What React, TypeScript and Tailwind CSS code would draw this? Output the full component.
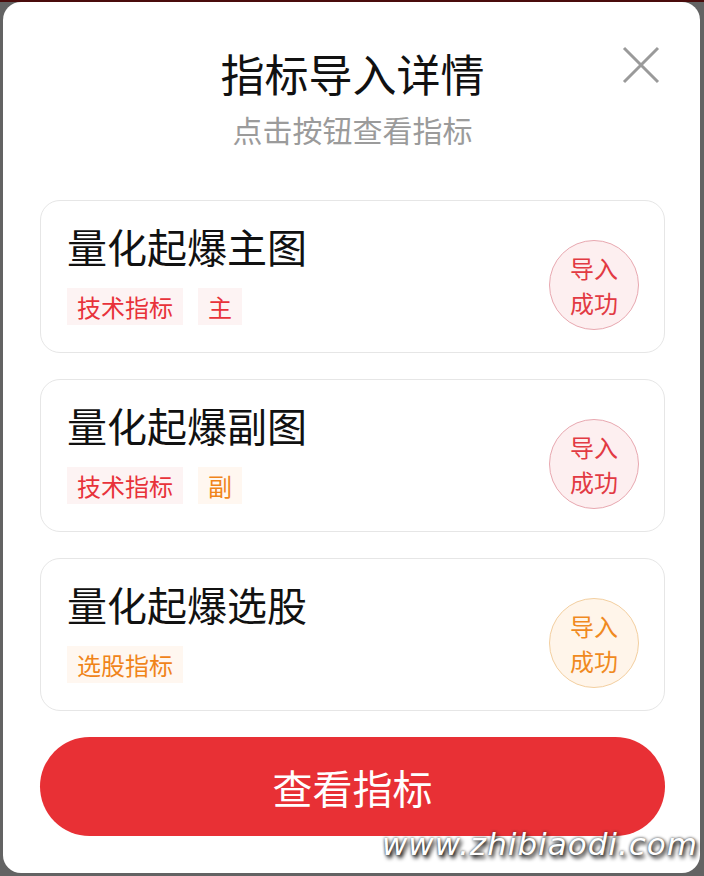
import React from 'react';

interface Tag {
  label: string;
  tone: 'red' | 'orange';
}

interface Item {
  name: string;
  tags: Tag[];
  tone: 'red' | 'orange';
}

const items: Item[] = [
  { name: '量化起爆主图', tags: [{ label: '技术指标', tone: 'red' }, { label: '主', tone: 'red' }], tone: 'red' },
  { name: '量化起爆副图', tags: [{ label: '技术指标', tone: 'red' }, { label: '副', tone: 'orange' }], tone: 'red' },
  { name: '量化起爆选股', tags: [{ label: '选股指标', tone: 'orange' }], tone: 'orange' },
];

const font = { fontFamily: '"Noto Sans CJK SC", "Noto Sans", sans-serif' };

const TagChip: React.FC<{ tag: Tag }> = ({ tag }) => (
  <span
    className={
      tag.tone === 'red'
        ? 'px-[10px] h-[37px] leading-[37px] text-[24px] bg-[#fdf3f3] text-[#e8323a]'
        : 'px-[10px] h-[37px] leading-[37px] text-[24px] bg-[#fff7f0] text-[#f0841a]'
    }
  >
    {tag.label}
  </span>
);

const Card: React.FC<{ item: Item }> = ({ item }) => (
  <div className="flex justify-between h-[153px] rounded-[20px] border border-[#e6e6e6] pl-[26px] pr-[25px]">
    <div className="pt-[21px]">
      <div className="text-[40px] leading-[48px] text-[#111]">{item.name}</div>
      <div className="flex gap-[15px] mt-[18px]">
        {item.tags.map((t) => (
          <TagChip key={t.label} tag={t} />
        ))}
      </div>
    </div>
    <div
      className={
        item.tone === 'red'
          ? 'mt-[39px] w-[90px] h-[90px] rounded-full border border-[#e8a8b0] bg-[#fdeff0] text-[#e23a43] flex flex-col items-center justify-center text-[24px] leading-[35px]'
          : 'mt-[39px] w-[90px] h-[90px] rounded-full border border-[#f3cfa0] bg-[#fff5ea] text-[#f08a1f] flex flex-col items-center justify-center text-[24px] leading-[35px]'
      }
    >
      <span>导入</span>
      <span>成功</span>
    </div>
  </div>
);

export default function App() {
  return (
    <div className="w-[704px] h-[876px] bg-[#636363] border-t-2 border-[#4a0c0c] pl-[3px] pr-[4px] pb-[3px]" style={font}>
      <div className="relative h-full bg-white rounded-[18px] pl-[37px] pr-[35px] pt-[45px]">
        <svg
          className="absolute top-[44px] right-[40px]"
          width="38"
          height="38"
          viewBox="0 0 38 38"
          fill="none"
          stroke="#9a9a9a"
          strokeWidth="3"
        >
          <path d="M2 2 L36 36 M36 2 L2 36" />
        </svg>

        <div className="text-center text-[44px] leading-[52px] text-[#111]">指标导入详情</div>
        <div className="text-center text-[30px] leading-[36px] text-[#9b9b9b] mt-[12px]">点击按钮查看指标</div>

        <div className="flex flex-col gap-[26px] mt-[53px]">
          {items.map((it) => (
            <Card key={it.name} item={it} />
          ))}
        </div>

        <button className="mt-[26px] w-full h-[99px] rounded-full bg-[#e83035] text-white text-[40px] leading-none">
          查看指标
        </button>

        <div
          className="absolute right-[2px] bottom-[6px] text-[31px] italic text-white tracking-[1px]"
          style={{ fontFamily: '"DejaVu Sans", sans-serif', textShadow: '2px 3px 4px #000, 0 0 3px #333' }}
        >
          www.zhibiaodi.com
        </div>
      </div>
    </div>
  );
}
